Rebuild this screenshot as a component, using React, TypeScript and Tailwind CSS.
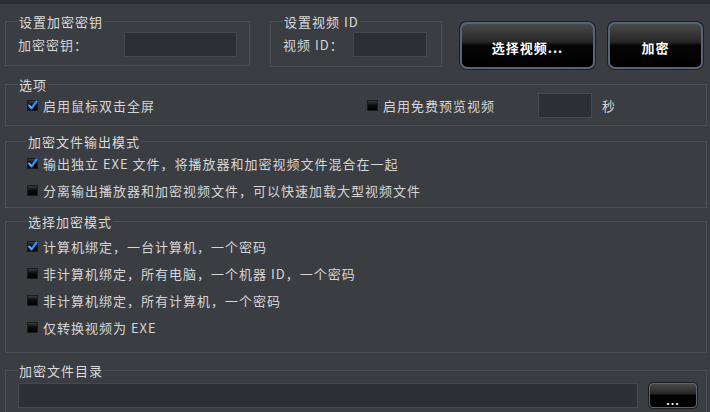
import type { ReactNode } from "react";

function Check({ on }: { on?: boolean }) {
  return (
    <span className="relative inline-block h-[11px] w-[11px] shrink-0 border border-[#1a1c1e] bg-[linear-gradient(to_bottom,#3a3c3f_0%,#0c0c0c_45%,#000_100%)]">
      {on && (
        <svg viewBox="0 0 11 11" className="absolute left-[-1px] top-[-1px] h-[11px] w-[11px]">
          <path d="M2 5.5 L4.5 8.5 L9.5 1.5" fill="none" stroke="#2f8fff" strokeWidth="2.2" strokeLinecap="round" strokeLinejoin="round" />
          <path d="M2.4 5.2 L4.5 7.6" fill="none" stroke="#bfe0ff" strokeWidth="0.8" />
        </svg>
      )}
    </span>
  );
}

function Row({ on, children }: { on?: boolean; children: ReactNode }) {
  return (
    <div className="flex h-[15px] items-center gap-[5px]">
      <Check on={on} />
      <span className="whitespace-nowrap">{children}</span>
    </div>
  );
}

function Group({ title, className, children }: { title: string; className?: string; children: ReactNode }) {
  return (
    <fieldset className={`border border-[#4d5156] ${className ?? ""}`}>
      <legend className="px-[1px] leading-[15px] text-[#dcdcdc]">{title}</legend>
      {children}
    </fieldset>
  );
}

function GlossButton({ children, className }: { children: ReactNode; className?: string }) {
  return (
    <button className={`border-[#56657a] bg-[linear-gradient(to_bottom,#4a4a4a_0%,#262626_42%,#050505_50%,#000_100%)] font-bold text-white shadow-[0_0_0_1px_#1c1e21] ${className ?? ""}`}>
      {children}
    </button>
  );
}

const inputCls = "h-[25px] border border-[#45494e] bg-[#2c2f33]";

export default function App() {
  return (
    <div className="h-[412px] w-[710px] overflow-hidden border-t-4 border-[#2b2e32] bg-[#3a3d41] pl-[5px] pr-[3px] font-['Noto_Sans_CJK_SC',sans-serif] text-[13px] tracking-[1px] text-[#d6d6d6]">
      <div className="flex h-[64px] items-start">
        <Group title="设置加密密钥" className="mt-[10px] h-[52px] w-[245px] pl-[12px] pr-[12px]">
          <div className="mt-[3px] flex items-center justify-between">
            <span>加密密钥：</span>
            <div className={`${inputCls} w-[113px]`} />
          </div>
        </Group>
        <Group title="设置视频 ID" className="ml-[20px] mt-[10px] h-[53px] w-[172px] pl-[12px] pr-[14px]">
          <div className="mt-[3px] flex items-center justify-between">
            <span>视频 ID：</span>
            <div className={`${inputCls} w-[74px]`} />
          </div>
        </Group>
        <GlossButton className="ml-[18px] mt-[18px] h-[47px] w-[135px] rounded-[7px] border-2 pt-[4px]">选择视频...</GlossButton>
        <GlossButton className="ml-[13px] mt-[18px] h-[47px] w-[95px] rounded-[7px] border-2 pt-[4px]">加密</GlossButton>
      </div>

      <Group title="选项" className="mt-[9px] pb-[7px] pl-[12px]">
        <div className="mt-[1px] flex items-center">
          <div className="ml-[9px] w-[340px]">
            <Row on>启用鼠标双击全屏</Row>
          </div>
          <div className="w-[171px]">
            <Row>启用免费预览视频</Row>
          </div>
          <div className={`${inputCls} h-[24px] w-[54px]`} />
          <span className="ml-[10px]">秒</span>
        </div>
      </Group>

      <Group title="加密文件输出模式" className="mt-[8px] pb-[9px] pl-[21px]">
        <div className="mt-[7px] flex flex-col gap-[12px]">
          <Row on>输出独立 EXE 文件，将播放器和加密视频文件混合在一起</Row>
          <Row>分离输出播放器和加密视频文件，可以快速加载大型视频文件</Row>
        </div>
      </Group>

      <Group title="选择加密模式" className="mt-[6px] pb-[17px] pl-[21px]">
        <div className="mt-[10px] flex flex-col gap-[12px]">
          <Row on>计算机绑定，一台计算机，一个密码</Row>
          <Row>非计算机绑定，所有电脑，一个机器 ID，一个密码</Row>
          <Row>非计算机绑定，所有计算机，一个密码</Row>
          <Row>仅转换视频为 EXE</Row>
        </div>
      </Group>

      <Group title="加密文件目录" className="mt-[10px] h-[60px] pl-[12px] pr-[9px]">
        <div className="mt-[5px] flex items-start justify-between">
          <div className={`${inputCls} h-[24px] w-[620px]`} />
          <GlossButton className="h-[25px] w-[48px] rounded-[4px] border pt-[8px] text-[11px] leading-[10px]">...</GlossButton>
        </div>
      </Group>
    </div>
  );
}
